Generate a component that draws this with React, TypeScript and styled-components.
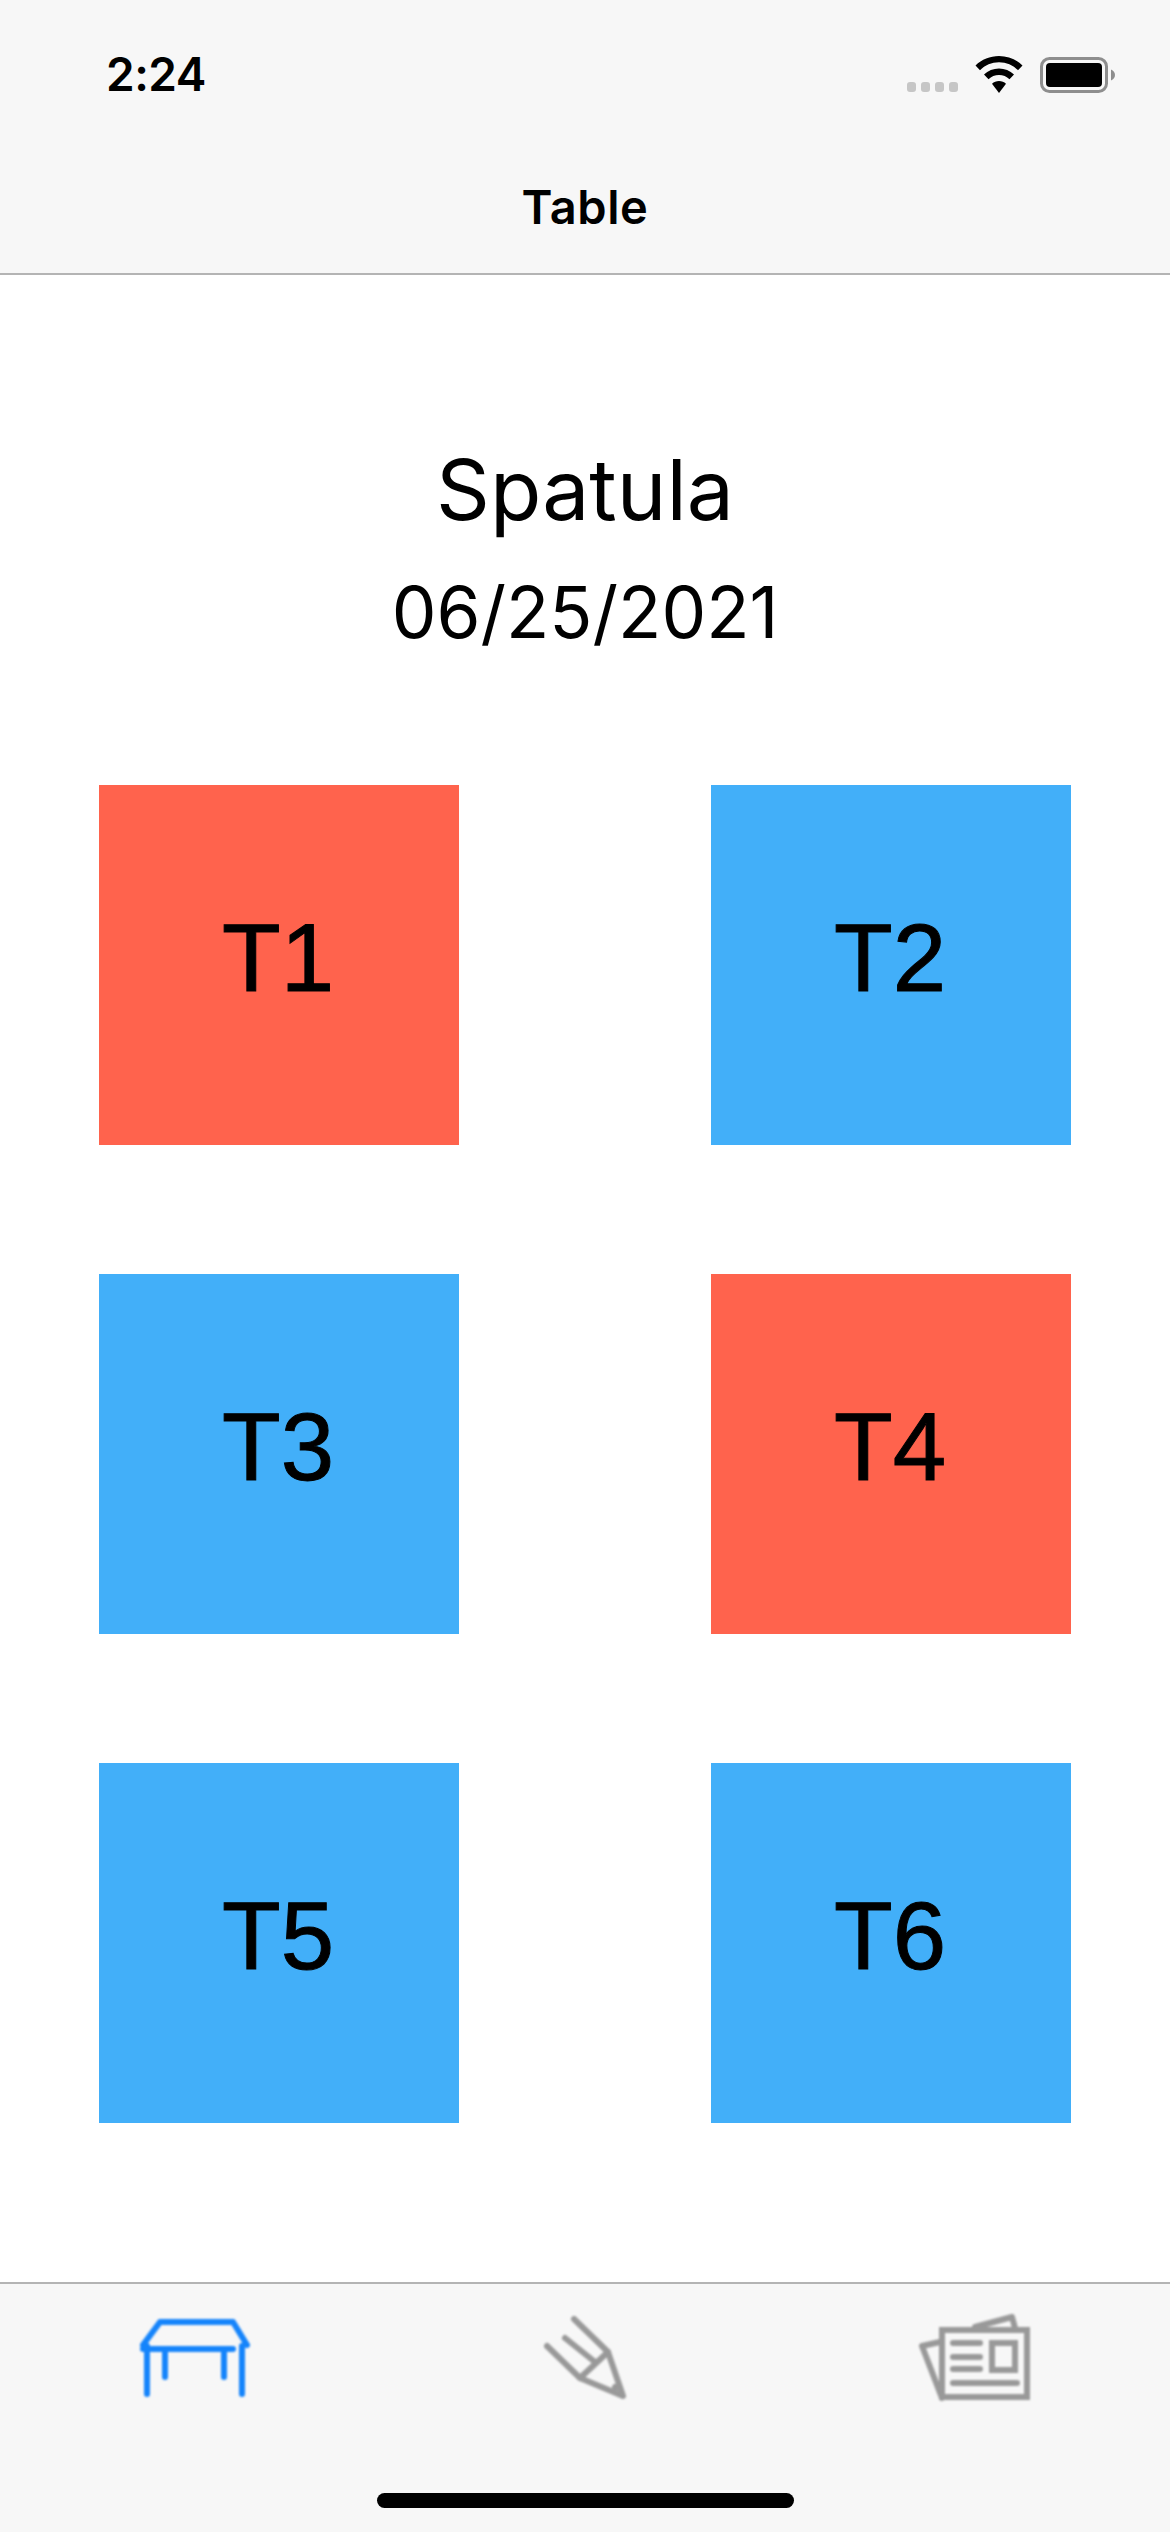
import React from 'react';
import styled, { createGlobalStyle } from 'styled-components';

const GlobalStyle = createGlobalStyle`
  html, body {
    margin: 0;
    padding: 0;
    background: #ffffff;
  }
`;

const Screen = styled.div`
  width: 1170px;
  height: 2532px;
  display: flex;
  flex-direction: column;
  overflow: hidden;
  background: #ffffff;
  color: #000000;
  font-family: Inter, "Liberation Sans", sans-serif;
`;

const Header = styled.header`
  height: 273px;
  flex-shrink: 0;
  display: flex;
  flex-direction: column;
  background: #f7f7f7;
  border-bottom: 2px solid #b4b4b4;
`;

const StatusBar = styled.div`
  display: flex;
  align-items: flex-end;
  justify-content: space-between;
  height: 38px;
  margin-top: 55px;
  padding: 0 55px 0 106px;
`;

const Time = styled.span`
  font-size: 46px;
  font-weight: 600;
  line-height: 38px;
  letter-spacing: -0.5px;
`;

const StatusIcons = styled.div`
  display: flex;
  align-items: flex-end;
  gap: 17px;
`;

const SignalDots = styled.div`
  display: flex;
  gap: 5px;
  margin-bottom: 1px;
`;

const SignalDot = styled.span`
  width: 9px;
  height: 10px;
  border-radius: 3px;
  background: #c6c6c6;
`;

const NavTitle = styled.h1`
  margin: 90px 0 0;
  font-size: 47px;
  font-weight: 600;
  line-height: 48px;
  letter-spacing: 0.6px;
  text-align: center;
`;

const Intro = styled.section`
  height: 303px;
  padding-top: 166px;
  flex-shrink: 0;
  display: flex;
  flex-direction: column;
  align-items: center;
`;

const Restaurant = styled.div`
  font-size: 84px;
  line-height: 98px;
`;

const DateLine = styled.div`
  margin-top: 29px;
  font-size: 71px;
  line-height: 88px;
`;

const TableGrid = styled.main`
  display: grid;
  grid-template-columns: 360px 360px;
  column-gap: 252px;
  row-gap: 129px;
  padding-left: 99px;
  margin-top: 41px;
`;

const TableTile = styled.div<{ $taken: boolean }>`
  width: 360px;
  height: 360px;
  display: flex;
  align-items: center;
  justify-content: center;
  box-sizing: border-box;
  padding: 0 2px 15px 0;
  background: ${props => (props.$taken ? '#ff634d' : '#42aff9')};
  font-family: "Liberation Sans", Arial, sans-serif;
  font-size: 96px;
`;

const TileLabel = styled.span`
  -webkit-text-stroke: 1px #000000;
  filter: blur(0.6px);
`;

const TabBar = styled.nav`
  margin-top: auto;
  height: 250px;
  box-sizing: border-box;
  display: flex;
  flex-direction: column;
  align-items: center;
  padding-top: 26px;
  background: #f7f7f7;
  border-top: 2px solid #b4b4b4;
`;

const TabRow = styled.div`
  width: 100%;
  display: grid;
  grid-template-columns: repeat(3, 1fr);
  justify-items: center;
`;

const TabIcon = styled.svg<{ $active?: boolean }>`
  display: block;
  width: 120px;
  height: 100px;
  fill: none;
  stroke: ${props => (props.$active ? '#1584fb' : '#999999')};
  stroke-width: 6;
  stroke-linecap: round;
  stroke-linejoin: round;
  filter: blur(1.2px);
`;

const HomeIndicator = styled.div`
  width: 417px;
  height: 15px;
  margin-top: 83px;
  border-radius: 8px;
  background: #000000;
`;

const tables = [
  { id: 'T1', taken: true },
  { id: 'T2', taken: false },
  { id: 'T3', taken: false },
  { id: 'T4', taken: true },
  { id: 'T5', taken: false },
  { id: 'T6', taken: false },
];

const WifiIcon = () => (
  <svg width="48" height="37" viewBox="0 0 48 37">
    <path
      d="M24 0C15 0 6.800 3.500 0.500 9.500L5 14.200C10 9.300 16.700 6.300 24 6.300S38 9.300 43 14.200L47.500 9.500C41.200 3.500 33 0 24 0Z"
      fill="#000"
    />
    <path
      d="M24 12.500C18.300 12.500 13 14.700 9 18.500L13.500 23.200C16.300 20.600 20 19 24 19S31.700 20.600 34.500 23.200L39 18.500C35 14.700 29.700 12.500 24 12.500Z"
      fill="#000"
    />
    <path d="M24 25C21.300 25 18.900 26 17 27.700L24 37L31 27.700C29.100 26 26.700 25 24 25Z" fill="#000" />
  </svg>
);

const BatteryIcon = () => (
  <svg width="75" height="36" viewBox="0 0 75 36">
    <rect x="1.500" y="1.500" width="65" height="33" rx="8" fill="none" stroke="#8e8e8e" strokeWidth="3" />
    <rect x="6" y="6" width="56" height="24" rx="4" fill="#000" />
    <path d="M71 12.500C73.500 13.500 75 15.500 75 18S73.500 22.500 71 23.500Z" fill="#8e8e8e" />
  </svg>
);

const TableIcon = () => (
  <TabIcon $active viewBox="0 0 120 100">
    <path d="M8 35L25 12H98L112 35" />
    <path d="M8 39H98" />
    <path d="M12 36V84M107 36V84M30 39V67M89 39V67" />
  </TabIcon>
);

const PencilIcon = () => (
  <TabIcon viewBox="0 0 120 100">
    <path d="M49 9L83 42L98 86L55 68L22 36" />
    <path d="M40 28L70 52" />
    <path d="M55 68L83 42" />
    <path d="M90 77L91 78" />
  </TabIcon>
);

const NewsIcon = () => (
  <TabIcon viewBox="0 0 120 100">
    <rect x="27" y="20" width="85" height="67" strokeLinejoin="miter" />
    <path d="M25 32L7 36L27 88" />
    <path d="M60 17L97 7L100 18" />
    <path d="M38 33H65M38 47H65M38 59H65M38 73H102" />
    <rect x="77" y="33" width="23" height="27" strokeLinejoin="miter" />
  </TabIcon>
);

const App: React.FC = () => {
  return (
    <Screen>
      <GlobalStyle />
      <Header>
        <StatusBar>
          <Time>2:24</Time>
          <StatusIcons>
            <SignalDots>
              {[0, 1, 2, 3].map(dot => (
                <SignalDot key={dot} />
              ))}
            </SignalDots>
            <WifiIcon />
            <BatteryIcon />
          </StatusIcons>
        </StatusBar>
        <NavTitle>Table</NavTitle>
      </Header>
      <Intro>
        <Restaurant>Spatula</Restaurant>
        <DateLine>06/25/2021</DateLine>
      </Intro>
      <TableGrid>
        {tables.map(table => (
          <TableTile key={table.id} $taken={table.taken}>
            <TileLabel>{table.id}</TileLabel>
          </TableTile>
        ))}
      </TableGrid>
      <TabBar>
        <TabRow>
          <TableIcon />
          <PencilIcon />
          <NewsIcon />
        </TabRow>
        <HomeIndicator />
      </TabBar>
    </Screen>
  );
};

export default App;
